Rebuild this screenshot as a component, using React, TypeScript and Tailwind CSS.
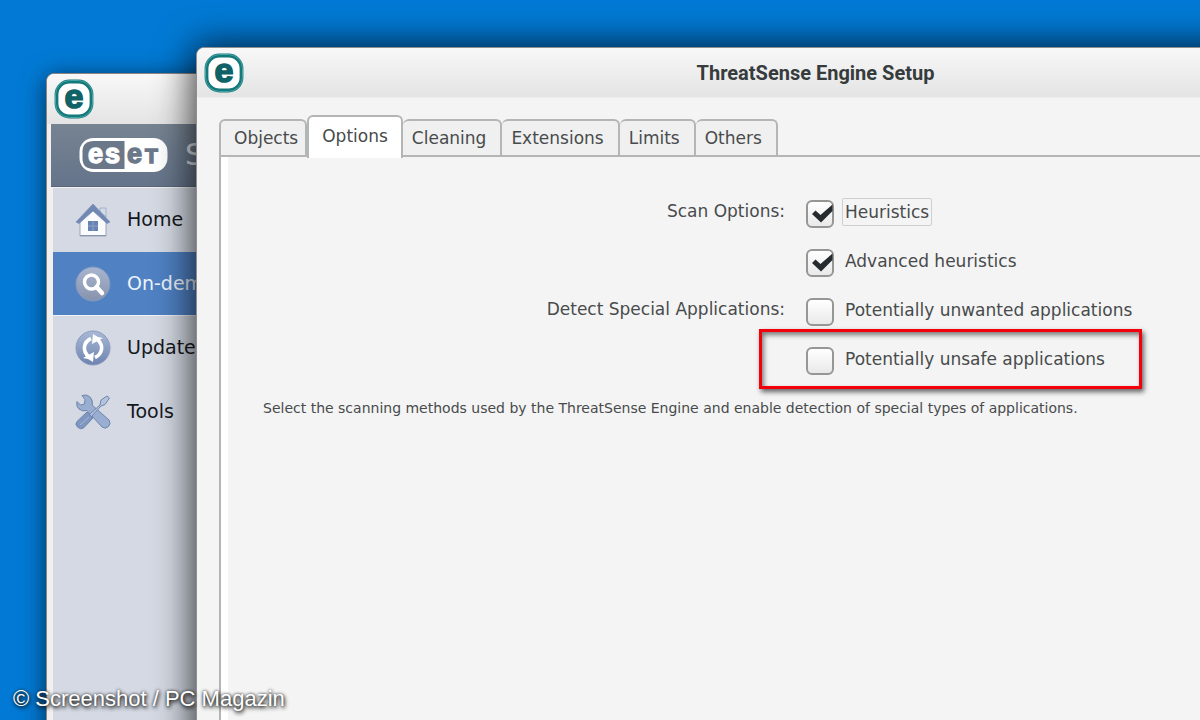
import React from 'react';
import { clsx } from 'clsx';

const tabs = ['Objects', 'Options', 'Cleaning', 'Extensions', 'Limits', 'Others'];

const detectOptions = [
  { id: 'heuristics', group: 'Scan Options:', label: 'Heuristics', checked: true, focused: true },
  { id: 'advanced', group: '', label: 'Advanced heuristics', checked: true },
  { id: 'unwanted', group: 'Detect Special Applications:', label: 'Potentially unwanted applications', checked: false },
  { id: 'unsafe', group: '', label: 'Potentially unsafe applications', checked: false, marked: true },
];

function AppIcon() {
  return (
    <svg viewBox="0 0 40 40" className="size-10 shrink-0 overflow-visible" aria-hidden="true">
      <rect x="2.5" y="2.5" width="35" height="35" rx="13" fill="#fff" stroke="#15787b" strokeWidth="3.8" />
      <rect x="1.5" y="1.5" width="37" height="37" rx="14" fill="none" stroke="#45a5a5" strokeWidth="1" />
      <text x="20" y="29" textAnchor="middle" fontSize="34" fontWeight="700" fill="#0f6266" stroke="#0f6266" strokeWidth="1.6" fontFamily="Liberation Sans, sans-serif">
        e
      </text>
    </svg>
  );
}

function EsetLogo() {
  return (
    <svg viewBox="0 0 90 36" className="h-9 w-[90px] shrink-0" role="img" aria-label="eset">
      <rect x="0.5" y="1" width="88" height="34" rx="14" fill="#fff" />
      <path d="M45.500 4H15Q3.500 4 3.500 14.500V21.500Q3.500 32 15 32H45.500Z" fill="#6b7889" />
      <g fontFamily="Liberation Sans, sans-serif" fontSize="27" fontWeight="700" strokeWidth="1.4">
        <text x="9" y="26" fill="#fff" stroke="#fff">e</text>
        <text x="26" y="26" fill="#fff" stroke="#fff">s</text>
        <text x="48" y="26" fill="#6b7889" stroke="#6b7889">e</text>
        <text x="66" y="26" fill="#6b7889" fontSize="21" stroke="#6b7889">T</text>
      </g>
    </svg>
  );
}

function HomeIcon() {
  return (
    <svg viewBox="0 0 36 36" className="size-9" aria-hidden="true">
      <path d="M25 6h6v9l-6-5z" fill="#d3dbe9" stroke="#a5b2ca" />
      <path d="M5 19 18 6l13 13v15H5z" fill="#fafbfd" stroke="#9aa6bb" />
      <path d="M1 20 18 2l17 18-3 1.500L18 9 4 21.500z" fill="#7188b2" stroke="#7d91b6" strokeWidth=".8" />
      <rect x="13" y="19" width="10" height="10" fill="#6683b2" />
      <path d="M13 24h10M18 19v10" stroke="#8ba2c8" />
      <path d="M5 33.500h26" stroke="#8997ae" />
    </svg>
  );
}

function ScanIcon() {
  return (
    <svg viewBox="0 0 36 36" className="size-9" aria-hidden="true">
      <defs>
        <linearGradient id="scan" x2="0" y2="1">
          <stop stopColor="#a9b6d0" />
          <stop offset="1" stopColor="#8793ad" />
        </linearGradient>
      </defs>
      <circle cx="18" cy="18" r="17" fill="url(#scan)" stroke="#8198c4" />
      <circle cx="16.500" cy="16" r="7" fill="none" stroke="#fff" strokeWidth="3.4" />
      <path d="m21.500 21 5.500 6" stroke="#fff" strokeWidth="4.500" strokeLinecap="round" />
    </svg>
  );
}

function UpdateIcon() {
  return (
    <svg viewBox="0 0 36 36" className="size-9" aria-hidden="true">
      <defs>
        <linearGradient id="update" x2="0" y2="1">
          <stop stopColor="#a9b8d6" />
          <stop offset="1" stopColor="#6d84b0" />
        </linearGradient>
      </defs>
      <circle cx="18" cy="18" r="17" fill="url(#update)" stroke="#8b9cbe" />
      <g fill="none" stroke="#fff" strokeWidth="3.600">
        <path d="M14 27Q8.500 22 9.500 16.500 10.500 11 16 8.500" />
        <path d="M22 9Q27.500 14 26.500 19.500 25.500 25 20 27.500" />
      </g>
      <path d="m19 22-1 10-5-3-5-1zM17 14l1-10 5 3 5 1z" fill="#fff" />
    </svg>
  );
}

function ToolsIcon() {
  return (
    <svg viewBox="0 0 36 36" className="size-9" aria-hidden="true">
      <g stroke="#6e84ab" strokeLinejoin="round">
        <path
          d="M7 1.500 10 5.500l-.5 4.500L5.500 11 2 7.500Q.5 12 4 15t8 1.500L27 33q3.500 2.500 6.500-.5t.5-6.500L17.500 11.500Q18 5 14.500 2.500T7 1.500Z"
          fill="#9aaed1"
        />
        <path d="M32 2 26 6l-1 5-11 10 2 2 10-11 4-1.500L34.500 4Z" fill="#b4c4de" />
        <path d="m12 18 6 6L8.500 34Q5.500 36 2.500 33T2 27.500Z" fill="#7f97c0" />
        <path d="m14 23-9 8" stroke="#a6b8d8" fill="none" />
      </g>
    </svg>
  );
}

const menu = [
  { label: 'Home', icon: <HomeIcon /> },
  { label: 'On-demand', icon: <ScanIcon />, active: true },
  { label: 'Update', icon: <UpdateIcon /> },
  { label: 'Tools', icon: <ToolsIcon /> },
];

function MainWindow() {
  return (
    <section className="absolute top-[73px] -bottom-10 left-[46px] w-3/5 overflow-hidden rounded-tl-lg border border-[#8f8580] bg-[#f1f0ef] shadow-[0_4px_24px_rgba(0,0,0,0.6)]">
      <header className="flex h-[50px] items-center bg-linear-to-b from-[#f8f8f8] to-[#e4e4e4] px-[7px]">
        <AppIcon />
      </header>
      <div className="ml-1 flex h-[63px] items-center gap-4 border-b border-[#59667a] bg-linear-to-b from-[#768391] to-[#65748a] pl-7">
        <EsetLogo />
        <span className="text-3xl text-[#dde2e8]">S</span>
      </div>
      <nav className="mt-px ml-[6px] h-full bg-[#d4d9e3]">
        {menu.map((item) => (
          <a
            key={item.label}
            href="#"
            className={clsx(
              'flex h-16 items-center gap-4 border-b pl-[22px] text-[19px]',
              item.active ? 'border-[#eef1f6] bg-[#4f81c3] text-[#eef3fb]' : 'border-transparent text-[#15181c]'
            )}
          >
            {item.icon}
            {item.label}
          </a>
        ))}
      </nav>
    </section>
  );
}

function Tabs() {
  return (
    <div role="tablist" className="flex items-end">
      {tabs.map((tab) => {
        const active = tab === 'Options';
        return (
          <button
            key={tab}
            type="button"
            role="tab"
            aria-selected={active}
            className={clsx(
              'rounded-t-md border-t-2 border-r-2 border-[#b4b6b6] text-[17px] leading-6',
              active
                ? 'relative -mb-[3px] h-[43px] border-l-2 bg-white px-[13px] pb-1'
                : 'h-9 bg-[#f0f0f0] pr-[14px] pl-[9px] first:border-l-2 first:pr-[7px] first:pl-[13px]'
            )}
          >
            {tab}
          </button>
        );
      })}
    </div>
  );
}

function CheckBox({ id, checked }: { id: string; checked: boolean }) {
  return (
    <span className="relative size-7 shrink-0">
      <input
        id={id}
        type="checkbox"
        defaultChecked={checked}
        className="peer block size-7 appearance-none rounded-md border-2 border-[#969794] bg-linear-to-b from-white to-[#e9e9e9]"
      />
      <svg viewBox="0 0 28 28" className="pointer-events-none absolute inset-0 hidden peer-checked:block" aria-hidden="true">
        <path d="m6 14 3.500-3.500 5 4.500L26.500 4.500v6.500L15 22.500Z" fill="#252b2e" />
      </svg>
    </span>
  );
}

function SetupWindow() {
  return (
    <section className="absolute top-[47px] -right-[235px] -bottom-10 left-[196px] flex flex-col overflow-hidden rounded-t-lg border border-[#8f8f8f] bg-[#f4f4f4] text-[#484b4c] shadow-[0_2px_36px_4px_rgba(0,0,0,0.75)]">
      <header className="relative flex h-[50px] items-center justify-center border-b border-[#eee] bg-linear-to-b from-[#f8f8f8] to-[#e4e4e4]">
        <div className="absolute left-[7px]">
          <AppIcon />
        </div>
        <h1 className="font-['Roboto',sans-serif] text-xl font-bold text-[#363b3d]">ThreatSense Engine Setup</h1>
      </header>
      <main className="flex flex-1 flex-col pt-[17px] pl-[22px]">
        <Tabs />
        <div className="flex-1 border-t-2 border-l-2 border-[#b4b6b6]">
          <div className="h-full border-l-[7px] border-white pt-[43px]">
            <form className="flex flex-col gap-[21px] text-[17px]">
              {detectOptions.map((option) => (
                <div key={option.id} className="relative flex h-7 items-center">
                  <span className="w-[557px] pb-1 text-right">{option.group}</span>
                  <div className="relative ml-[21px] flex items-center gap-2">
                    <CheckBox id={option.id} checked={option.checked} />
                    <label
                      htmlFor={option.id}
                      className={clsx(
                        'mb-1 rounded-xs border px-[2px] leading-[26px]',
                        option.focused ? 'border-[#cfcfcf]' : 'border-transparent'
                      )}
                    >
                      {option.label}
                    </label>
                    {option.marked && (
                      <div className="pointer-events-none absolute -top-4 -right-[34px] -bottom-3 -left-[47px] border-[3px] border-[#f4000a] shadow-[2px_3px_5px_rgba(0,0,0,0.6),inset_2px_3px_5px_rgba(0,0,0,0.5)]" />
                    )}
                  </div>
                </div>
              ))}
            </form>
            <p className="mt-[21px] pl-[35px] text-sm leading-6">
              Select the scanning methods used by the ThreatSense Engine and enable detection of special types of applications.
            </p>
          </div>
        </div>
      </main>
    </section>
  );
}

export default function App() {
  return (
    <div className="relative h-screen overflow-hidden bg-[#027ad5] font-['DejaVu_Sans',sans-serif]">
      <MainWindow />
      <SetupWindow />
      <p className="absolute bottom-[5px] left-[13px] font-['Liberation_Sans',sans-serif] text-[22px] text-white [text-shadow:1px_2px_4px_#000,0_0_3px_#333]">
        © Screenshot / PC Magazin
      </p>
    </div>
  );
}
